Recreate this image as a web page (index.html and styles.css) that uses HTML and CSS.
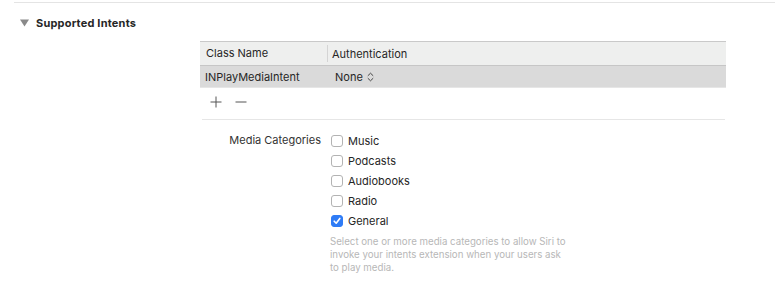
FILE: index.html
```html
<!DOCTYPE html>
<html lang="en">
<head>
  <meta charset="UTF-8" />
  <title>Supported Intents</title>
  <link rel="stylesheet" href="styles.css">
</head>
<body>
  <div class="top-rule"></div>

  <div class="section-title">
    <svg class="disclosure" width="9" height="8" viewBox="0 0 9 8"><path d="M0 0.5 H9 L4.5 7.5 Z" fill="#8a8a8a"/></svg>
    <span>Supported Intents</span>
  </div>

  <div class="intents">
    <div class="intents-head">
      <div class="col col-name">Class Name</div>
      <div class="col col-auth">Authentication</div>
    </div>
    <div class="intents-row">
      <div class="col col-name">INPlayMediaIntent</div>
      <div class="col col-auth">None
        <svg class="updown" width="7" height="10" viewBox="0 0 7 10"><path d="M0.8 3.8 L3.5 1.2 L6.2 3.8 M0.8 6.2 L3.5 8.8 L6.2 6.2" fill="none" stroke="#444" stroke-width="1"/></svg>
      </div>
    </div>
  </div>

  <div class="add-remove">
    <svg width="12" height="12" viewBox="0 0 12 12"><path d="M6 0.5 V11.5 M0.5 6 H11.5" stroke="#555" stroke-width="1"/></svg>
    <svg width="12" height="12" viewBox="0 0 12 12"><path d="M0.5 6 H11.5" stroke="#555" stroke-width="1"/></svg>
  </div>

  <div class="mid-rule"></div>

  <div class="categories">
    <div class="cat-label">Media Categories</div>
    <div class="cat-list">
      <label class="cat"><span class="box"></span>Music</label>
      <label class="cat"><span class="box"></span>Podcasts</label>
      <label class="cat"><span class="box"></span>Audiobooks</label>
      <label class="cat"><span class="box"></span>Radio</label>
      <label class="cat"><span class="box checked"><svg width="8" height="8" viewBox="0 0 8 8"><path d="M1.2 4.2 L3.2 6.2 L6.8 1.4" fill="none" stroke="#fff" stroke-width="1.6" stroke-linecap="round" stroke-linejoin="round"/></svg></span>General</label>
      <p class="help">Select one or more media categories to allow Siri to<br>invoke your intents extension when your users ask<br>to play media.</p>
    </div>
  </div>
</body>
</html>
```

FILE: styles.css
```css
body {
  margin: 0;
  background: #fff;
  color: #262626;
  font-family: Inter, "Liberation Sans", Arial, sans-serif;
  font-size: 11px;
}
.top-rule {
  height: 1px;
  margin: 2px 0 0 14px;
  background: #e4e4e4;
}
.section-title {
  display: flex;
  align-items: center;
  gap: 7px;
  margin: 12px 0 0 20px;
  height: 15px;
  font-weight: 700;
  letter-spacing: 0.2px;
  color: #262626;
}
.intents {
  width: 526px;
  margin: 11px 0 0 200px;
  border-top: 1px solid #c9c9c9;
}
.intents-head {
  display: flex;
  align-items: center;
  height: 23px;
  background: #eeefee;
  border-bottom: 1px solid #c6c6c6;
}
.intents-row {
  display: flex;
  align-items: center;
  height: 21px;
  background: #dadada;
  border-bottom: 1px solid #e6e6e6;
}
.col-name {
  width: 128px;
  box-sizing: border-box;
  padding-left: 6px;
}
.intents-row .col-name {
  padding-left: 5px;
}
.intents-head .col-name {
  border-right: 1px solid #d4d4d4;
  height: 17px;
  line-height: 17px;
}
.intents-head .col-auth {
  padding-left: 4px;
}
.intents-row .col-auth {
  padding-left: 7px;
  display: flex;
  align-items: center;
  gap: 4px;
}
.add-remove {
  display: flex;
  gap: 13px;
  margin: 8px 0 0 210px;
}
.mid-rule {
  height: 1px;
  width: 523px;
  margin: 11px 0 0 202px;
  background: #e6e6e6;
}
.categories {
  display: flex;
  margin-top: 14px;
}
.cat-label {
  width: 321px;
  text-align: right;
  line-height: 13px;
  color: #333;
}
.cat-list {
  margin-left: 10px;
}
.cat {
  display: flex;
  align-items: center;
  height: 13px;
  margin-bottom: 7px;
  color: #262626;
}
.box {
  width: 12px;
  height: 12px;
  box-sizing: border-box;
  border: 1px solid #b3b3b3;
  border-radius: 3px;
  background: #fff;
  margin-right: 5px;
  display: flex;
  align-items: center;
  justify-content: center;
}
.box.checked {
  background: #2f7cf6;
  border-color: #2f7cf6;
}
.help {
  margin: 8px 0 0 -1px;
  font-size: 9.7px;
  line-height: 13px;
  color: #b7b7b7;
  white-space: nowrap;
}
```
